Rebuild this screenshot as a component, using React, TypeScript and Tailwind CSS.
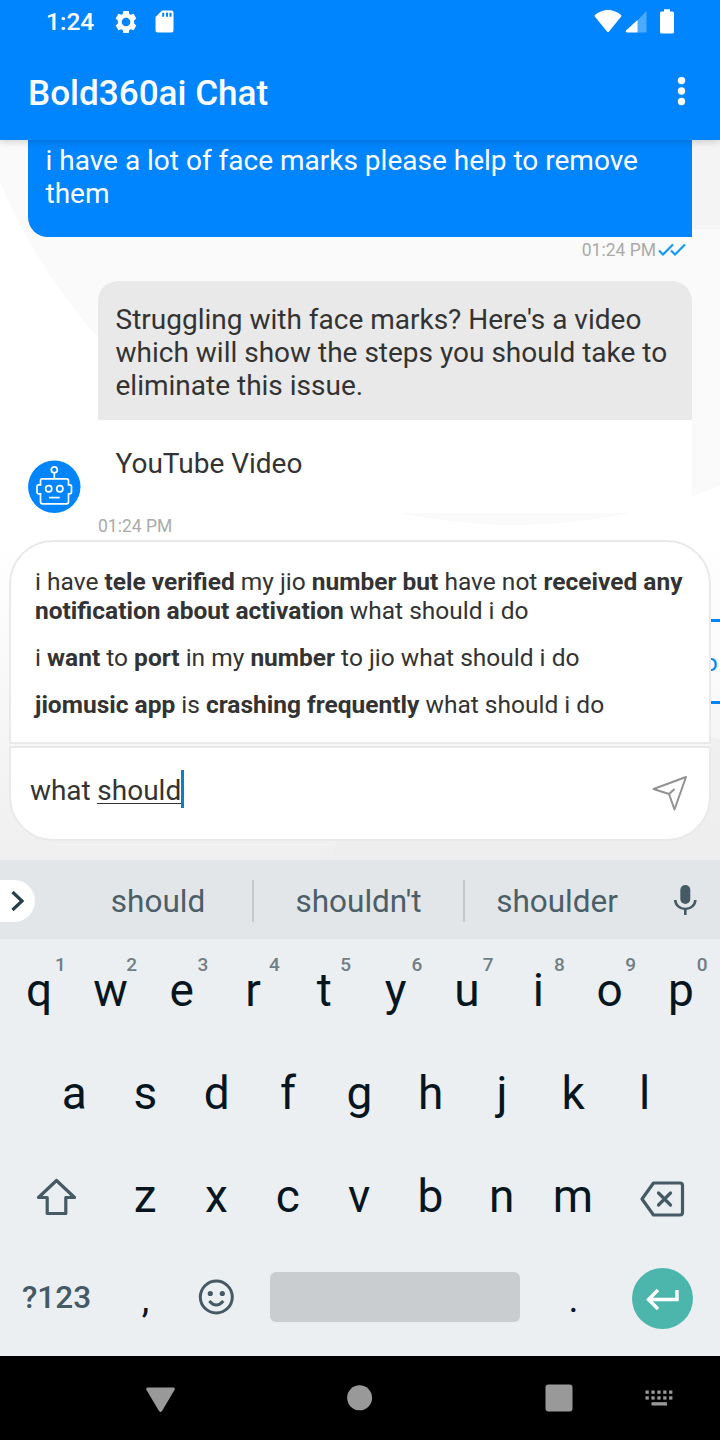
import React from "react";

const topRow: [string, string][] = [
  ["q", "1"], ["w", "2"], ["e", "3"], ["r", "4"], ["t", "5"],
  ["y", "6"], ["u", "7"], ["i", "8"], ["o", "9"], ["p", "0"],
];
const homeRow = ["a", "s", "d", "f", "g", "h", "j", "k", "l"];
const bottomRow = ["z", "x", "c", "v", "b", "n", "m"];

function StatusBar() {
  return (
    <div className="flex h-[44px] items-center pl-[46px] text-white">
      <span className="w-[68px] text-[24.5px] font-medium leading-[44px]">1:24</span>
      <svg className="h-6 w-6" viewBox="0 0 24 24" fill="#fff">
        <path
          fillRule="evenodd"
          d="M9.300 1h5.400l.6 3 1.400.8 2.900-1 2.700 4.600-2.200 2v3.200l2.200 2-2.700 4.600-2.900-1-1.400.8-.6 3H9.300l-.6-3-1.400-.8-2.900 1-2.700-4.600 2.200-2v-3.200l-2.200-2 2.700-4.600 2.900 1 1.400-.8zM12 7.700a4.300 4.300 0 1 0 0 8.600a4.300 4.300 0 1 0 0-8.600z"
        />
      </svg>
      <svg className="ml-[17px] h-6 w-[19px]" viewBox="0 0 19 24" fill="#fff">
        <path fillRule="evenodd" d="M7 .500h9.500q2 0 2 2v18q0 2-2 2h-14q-2 0-2-2V7zM7.200 2.700v4h2v-4zM11 2.700v4h2v-4zM14.500 2.700v4h2v-4z" />
      </svg>
      <svg className="ml-auto h-6 w-[28px]" viewBox="0 0 28 24" fill="#fff">
        <path d="M1.200 4.700Q14-4.800 26.800 4.700q1 1 .2 2L15 21.500q-1 1.200-2 0L1 6.700q-.8-1 .2-2z" />
      </svg>
      <svg className="ml-[3px] h-6 w-[22px]" viewBox="0 0 22 24">
        <path d="M12 11 21 1.500q.5-.5.5.5v19.500q0 1-1 1H12z" fill="#4dabff" />
        <path d="M12.500 10v12.500H2q-2-.5-1-2z" fill="#fff" />
      </svg>
      <svg className="ml-[12px] mr-[45px] h-[26px] w-[16px]" viewBox="0 0 16 26" fill="#fff">
        <path d="M5 .300h6v2.200h2.500q1.500 0 1.500 1.500v19q0 1.500-1.500 1.500h-11Q1 24.500 1 23V4q0-1.500 1.500-1.500H5z" />
      </svg>
    </div>
  );
}

function AppHeader() {
  return (
    <header className="relative z-10 h-[140px] bg-[#0085ff] shadow-[0_2px_7px_rgba(0,0,0,0.16)]">
      <StatusBar />
      <div className="flex h-24 items-center justify-between pl-[28px] pr-[34px]">
        <h1 className="pt-px text-[35.1px] font-medium leading-[96px] text-white">Bold360ai Chat</h1>
        <svg className="h-[30px] w-[9px]" viewBox="0 0 9 30" fill="#fff">
          <circle cx="4.500" cy="3.600" r="3.700" />
          <circle cx="4.500" cy="14" r="3.700" />
          <circle cx="4.500" cy="24.500" r="3.700" />
        </svg>
      </div>
    </header>
  );
}

function Backdrop() {
  return (
    <svg className="absolute inset-0 h-[720px] w-[720px]" viewBox="0 140 720 720">
      <defs>
        <linearGradient id="fade" x1="0" y1="540" x2="0" y2="860" gradientUnits="userSpaceOnUse">
          <stop offset="0" stopColor="#fff" />
          <stop offset="1" stopColor="#efefef" />
        </linearGradient>
      </defs>
      <rect y="140" width="720" height="720" fill="url(#fade)" />
      <circle cx="515" cy="-33" r="558" fill="#fafafa" />
      <path d="M600 140h120v89H600z" fill="#f4f4f4" />
      <circle cx="600" cy="1060" r="342" fill="#ededed" opacity="0.75" />
    </svg>
  );
}

function BotAvatar() {
  return (
    <svg className="h-[53px] w-[53px] shrink-0" viewBox="0 0 53 53" fill="none" stroke="#fff" strokeWidth="1.700">
      <circle cx="26.300" cy="26.700" r="26.200" fill="#0085ff" stroke="none" />
      <circle cx="26.300" cy="9.800" r="3" />
      <path d="M26.300 12.800v5.700M14.500 18.800h24q2 0 2 2v4h1.500q1.500 0 1.500 1.500v6q0 1.500-1.500 1.500h-1.500v8q0 2-2 2h-24q-2 0-2-2v-8h-2q-1.500 0-1.500-1.500v-6q0-1.500 1.500-1.500h2v-4q0-2 1.500-2z" />
      <circle cx="20.700" cy="28.800" r="3.100" />
      <circle cx="31.800" cy="28.800" r="3.100" />
      <path d="M21 37.600h10.700" />
    </svg>
  );
}

function Messages() {
  return (
    <div className="relative h-[400px]">
      <div className="ml-[28px] h-[97px] w-[664px] rounded-bl-[20px] bg-[#0085ff] pl-[17.5px] pt-[4px] text-[28px] leading-[33px] text-white">
        i have a lot of face marks please help to remove
        <br />
        them
      </div>
      <div className="flex h-[44px] items-start justify-end pr-[34px] pt-[2px] text-[17.5px] leading-[22px] text-[#aaa]">
        <span>01:24 PM</span>
        <svg className="ml-[2px] mt-[4px] h-[14px] w-[28px]" viewBox="0 0 28 14" fill="none" stroke="#1499f8" strokeWidth="2.200">
          <path d="m1 7.500 4 4L15 1.500M13 7.500l4 4L27 1.500" />
        </svg>
      </div>
      <div className="ml-[98px] h-[139px] w-[594px] rounded-t-[20px] bg-[#e9e9e9] pl-[17.5px] pt-[22px] text-[28px] leading-[33px] text-[#333]">
        Struggling with face marks? Here's a video
        <br />
        which will show the steps you should take to
        <br />
        eliminate this issue.
      </div>
      <div className="flex h-[93px] items-end pl-[28px]">
        <BotAvatar />
        <div className="ml-[17px] h-[93px] w-[594px] bg-white pl-[17.5px] pt-[27px] text-[28px] leading-[33px] text-[#333]">
          YouTube Video
        </div>
      </div>
      <div className="ml-[98px] pt-px text-[17.5px] leading-[25px] text-[#aaa]">01:24 PM</div>
    </div>
  );
}

function Composer() {
  return (
    <div className="relative mx-[9px]">
      <div className="h-[204px] rounded-t-[44px] border-2 border-[#e9e9e9] bg-white pl-[24px] pt-[26px] text-[24.5px] leading-[28.5px] text-[#333] [&_b]:font-bold">
        <p className="whitespace-nowrap">
          i have <b>tele verified</b> my jio <b>number but</b> have not <b>received any</b>
          <br />
          <b>notification about activation</b> what should i do
        </p>
        <p className="mt-[18.5px]">
          i <b>want</b> to <b>port</b> in my <b>number</b> to jio what should i do
        </p>
        <p className="mt-[18.5px]">
          <b>jiomusic app</b> is <b>crashing frequently</b> what should i do
        </p>
      </div>
      <div className="h-[2px] bg-[#f6f6f6]" />
      <div className="flex h-[95px] items-start rounded-b-[44px] border-2 border-[#e9e9e9] bg-white pl-[19px] text-[28px] text-[#333]">
        <span className="mt-[25px] whitespace-pre leading-[36px] tracking-[-0.1px]">what </span>
        <span className="mt-[25px] h-[31px] border-b border-[#333] leading-[36px]">should</span>
        <span className="mt-[22px] h-[38px] w-[3px] bg-[#0a7fc2]" />
        <svg className="ml-auto mr-[20px] mt-[27px] h-[38px] w-[38px]" viewBox="0 0 38 38" fill="none" stroke="#929292" strokeWidth="2" strokeLinecap="round" strokeLinejoin="round">
          <path d="M35 2 2.500 14 18 19l5.500 15.500zM18 19l5-4.500" />
        </svg>
      </div>
    </div>
  );
}

function Chat() {
  return (
    <main className="relative h-[720px] overflow-hidden">
      <Backdrop />
      <div className="absolute left-[600px] top-[479px] flex h-[85px] w-[140px] items-center border-y-[3px] border-[#0085ff] bg-white/40 pl-[104px] pt-[2px] text-[24px] text-[#0085ff]">
        o
      </div>
      <Messages />
      <Composer />
    </main>
  );
}

function Suggestions() {
  return (
    <div className="flex h-[79px] items-center bg-[#e2e6e9] text-[31.5px] leading-[42px] text-[#4c5e67]">
      <div className="mt-[2px] flex h-[42px] w-[35px] items-center rounded-r-[21px] bg-white">
        <svg className="ml-[11px] h-[22px] w-[14px]" viewBox="0 0 14 22" fill="none" stroke="#263f49" strokeWidth="3.200">
          <path d="m1.500 2 9.500 9-9.500 9" />
        </svg>
      </div>
      <div className="w-[217px] pl-[29px] pt-[5px] text-center">should</div>
      <div className="mt-[2px] h-[42px] w-[2px] bg-[#c3c9cc]" />
      <div className="w-[209px] pt-[5px] text-center">shouldn't</div>
      <div className="mt-[2px] h-[42px] w-[2px] bg-[#c3c9cc]" />
      <div className="w-[184px] pt-[5px] text-center">shoulder</div>
      <svg className="ml-[24px] h-[32px] w-[24px]" viewBox="0 0 24 32" fill="none" stroke="#455a64" strokeWidth="2.600">
        <rect x="7.300" y="1" width="10" height="19" rx="5" fill="#455a64" stroke="none" />
        <path d="M2.300 16a10 9 0 0 0 20 0M12.300 25v6" />
      </svg>
    </div>
  );
}

function Keyboard() {
  return (
    <section className="h-[496px] bg-[#ebeff2] text-[46px] text-[#07161e]">
      <Suggestions />
      <div className="flex h-[103px] px-[3.5px] leading-[102px]">
        {topRow.map(([letter, digit]) => (
          <div key={letter} className="relative w-[71.3px] text-center">
            {letter}
            <span className="absolute right-[9px] top-[14px] text-[19px] font-medium leading-[24px] text-[#717e84]">{digit}</span>
          </div>
        ))}
      </div>
      <div className="flex h-[103px] pl-[38.5px] leading-[102px]">
        {homeRow.map((letter) => (
          <div key={letter} className="w-[71.3px] text-center">{letter}</div>
        ))}
      </div>
      <div className="flex h-[103px] items-start leading-[102px]">
        <svg className="ml-[36px] mr-[32.5px] mt-[32px] h-[40px] w-[41px]" viewBox="0 0 41 40" fill="none" stroke="#455a64" strokeWidth="3.200" strokeLinejoin="round">
          <path d="M20.500 3.500 2.500 20.500h8.700v16h18.600v-16h8.700z" />
        </svg>
        {bottomRow.map((letter) => (
          <div key={letter} className="w-[71.3px] text-center">{letter}</div>
        ))}
        <svg className="ml-[31.5px] mt-[36px] h-[36px] w-[45px]" viewBox="0 0 45 36" fill="none" stroke="#455a64" strokeWidth="3.200" strokeLinejoin="round" strokeLinecap="round">
          <path d="M13.500 2H40q2.500 0 2.500 2.500v27Q42.500 34 40 34H13.500L2 18z" />
          <path d="m18.500 12 12 12m0-12-12 12" />
        </svg>
      </div>
      <div className="flex h-[98px] items-center leading-[98px]">
        <div className="w-[112px] pl-[22px] pt-[2px] text-[31.5px] font-medium text-[#455a64]">?123</div>
        <div className="w-[67px] pt-[3px] text-center text-[38px]">,</div>
        <svg className="ml-[19px] h-[36px] w-[36px]" viewBox="0 0 36 36" fill="none" stroke="#455a64" strokeWidth="3">
          <circle cx="18.300" cy="18" r="16" />
          <path d="M11.300 22q7 8 14 0" />
          <circle cx="12.300" cy="14.500" r="2.600" fill="#455a64" stroke="none" />
          <circle cx="24.300" cy="14.500" r="2.600" fill="#455a64" stroke="none" />
        </svg>
        <div className="ml-[36px] h-[50px] w-[250px] rounded-[6px] bg-[#c9cdd0]" />
        <div className="ml-[18px] w-[71px] pt-[4px] text-center text-[38px]">.</div>
        <div className="ml-[23px] mt-[2px] flex h-[61px] w-[61px] items-center justify-center rounded-full bg-[#4db6ac]">
          <svg className="mt-[2px] h-[24px] w-[36px]" viewBox="0 0 36 24" fill="none" stroke="#fff" strokeWidth="3.400">
            <path d="M32 3v9.500H3.500M13 3l-9.500 9.500L13 22" />
          </svg>
        </div>
      </div>
    </section>
  );
}

function NavBar() {
  return (
    <nav className="flex h-[84px] items-center bg-black">
      <svg className="h-[84px] w-[720px]" viewBox="0 1356 720 84" fill="#999">
        <path d="M147.500 1387.500h26q2 .5 1 2.500L162 1411q-1.500 2-3 0L146.500 1390q-1-2 1-2.500z" />
        <circle cx="359.600" cy="1397.800" r="12.500" />
        <rect x="545.500" y="1384.500" width="27" height="27" rx="3" />
        {[0, 1, 2, 3, 4].map((i) => (
          <g key={i}>
            <rect x={645.500 + i * 5.900} y="1390.500" width="3.300" height="3.300" />
            <rect x={645.500 + i * 5.900} y="1396.300" width="3.300" height="3.300" />
          </g>
        ))}
        <rect x="651.500" y="1402.200" width="15.500" height="3.300" />
      </svg>
    </nav>
  );
}

export default function App() {
  return (
    <div className="h-[1440px] w-[720px] overflow-hidden bg-white font-['Roboto',sans-serif]">
      <AppHeader />
      <Chat />
      <Keyboard />
      <NavBar />
    </div>
  );
}
